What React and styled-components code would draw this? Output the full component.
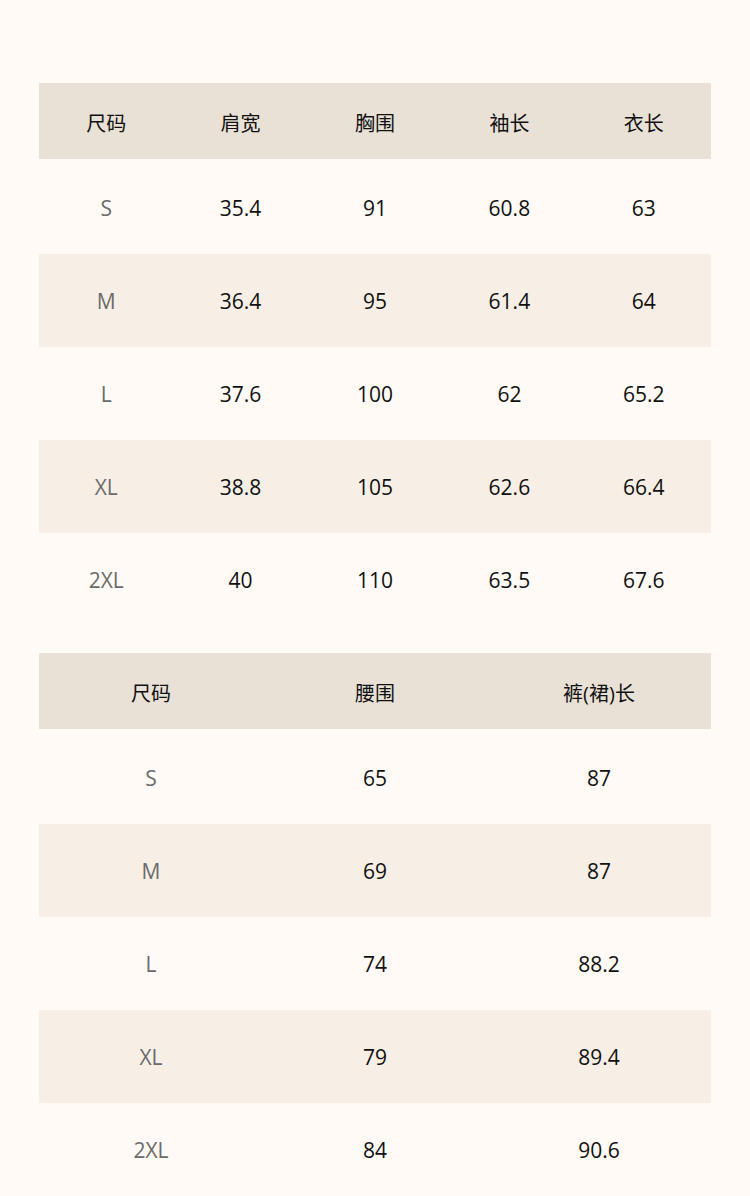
import React from "react";
import styled, { createGlobalStyle } from "styled-components";

const GlobalStyle = createGlobalStyle`
  html, body {
    margin: 0;
    padding: 0;
    background: #fffaf5;
  }
  body {
    font-family: "Open Sans", "Noto Sans CJK SC", sans-serif;
  }
`;

const Page = styled.div`
  padding: 83px 39px 0;
  display: flex;
  flex-direction: column;
  gap: 27px;
`;

const Table = styled.div`
  display: grid;
  grid-template-columns: repeat(${(p) => p.cols}, 1fr);
`;

const HeadCell = styled.div`
  height: 76px;
  display: flex;
  align-items: center;
  justify-content: center;
  background: #e9e1d6;
  color: #111;
  font-size: 20px;
  padding-top: 3px;
  box-sizing: border-box;
`;

const Cell = styled.div`
  height: ${(p) => (p.first ? 95 : 93)}px;
  display: flex;
  align-items: center;
  justify-content: center;
  background: ${(p) => (p.alt ? "#f7efe5" : "transparent")};
  color: ${(p) => (p.size ? "#6b6b6b" : "#111")};
  font-size: 21px;
  padding-top: ${(p) => (p.first ? 3 : 1)}px;
  box-sizing: border-box;
`;

const tops = {
  head: ["尺码", "肩宽", "胸围", "袖长", "衣长"],
  rows: [
    ["S", "35.4", "91", "60.8", "63"],
    ["M", "36.4", "95", "61.4", "64"],
    ["L", "37.6", "100", "62", "65.2"],
    ["XL", "38.8", "105", "62.6", "66.4"],
    ["2XL", "40", "110", "63.5", "67.6"],
  ],
};

const bottoms = {
  head: ["尺码", "腰围", "裤(裙)长"],
  rows: [
    ["S", "65", "87"],
    ["M", "69", "87"],
    ["L", "74", "88.2"],
    ["XL", "79", "89.4"],
    ["2XL", "84", "90.6"],
  ],
};

const SizeTable = ({ data }) => (
  <Table cols={data.head.length}>
    {data.head.map((h) => (
      <HeadCell key={h}>{h}</HeadCell>
    ))}
    {data.rows.map((row, i) =>
      row.map((v, j) => (
        <Cell key={`${i}-${j}`} first={i === 0} alt={i % 2 === 1} size={j === 0}>
          {v}
        </Cell>
      ))
    )}
  </Table>
);

export default function App() {
  return (
    <>
      <GlobalStyle />
      <Page>
        <SizeTable data={tops} />
        <SizeTable data={bottoms} />
      </Page>
    </>
  );
}
